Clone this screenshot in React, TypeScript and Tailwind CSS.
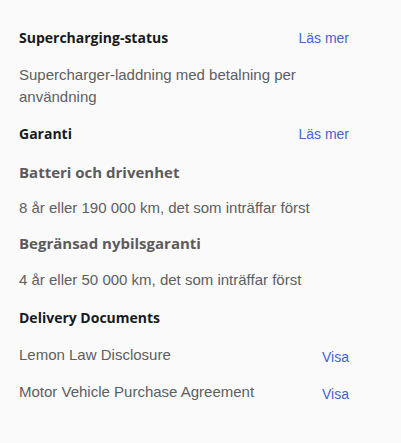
const heading = "font-['Open_Sans',sans-serif] text-[14px] font-bold leading-[20px]";
const subheading = "font-['Open_Sans',sans-serif] text-[15px] font-bold leading-[20px] text-[#5c5b5c]";
const body = "font-['Liberation_Sans',Arial,sans-serif] text-[15px] leading-[22px] text-[#5c5e62]";
const link = "font-['Liberation_Sans',Arial,sans-serif] text-[14px] leading-[20px] text-[#4562d6]";

function HeaderRow({ title, action }: { title: string; action: string }) {
  return (
    <div className="flex items-center justify-between">
      <h3 className={`${heading} text-[#171a20]`}>{title}</h3>
      <a className={link}>{action}</a>
    </div>
  );
}

function DocRow({ name }: { name: string }) {
  return (
    <div className="flex justify-between">
      <span className={body}>{name}</span>
      <a className={`${link} pt-[3px]`}>Visa</a>
    </div>
  );
}

export default function App() {
  return (
    <div className="min-h-[443px] w-[401px] bg-[#fafafa]">
      <div className="ml-[19px] w-[330px] pt-[28px]">
        <HeaderRow title="Supercharging-status" action="Läs mer" />
        <p className={`${body} mt-[16px] pr-[30px]`}>
          Supercharger-laddning med betalning per användning
        </p>
        <div className="mt-[16px]">
          <HeaderRow title="Garanti" action="Läs mer" />
        </div>
        <h4 className={`${subheading} mt-[18px]`}>Batteri och drivenhet</h4>
        <p className={`${body} mt-[15px]`}>8 år eller 190 000 km, det som inträffar först</p>
        <h4 className={`${subheading} mt-[14px]`}>Begränsad nybilsgaranti</h4>
        <p className={`${body} mt-[16px]`}>4 år eller 50 000 km, det som inträffar först</p>
        <h3 className={`${heading} mt-[17px] text-[#171a20]`}>Delivery Documents</h3>
        <div className="mt-[16px] flex flex-col gap-[14px]">
          <DocRow name="Lemon Law Disclosure" />
          <DocRow name="Motor Vehicle Purchase Agreement" />
        </div>
      </div>
    </div>
  );
}
